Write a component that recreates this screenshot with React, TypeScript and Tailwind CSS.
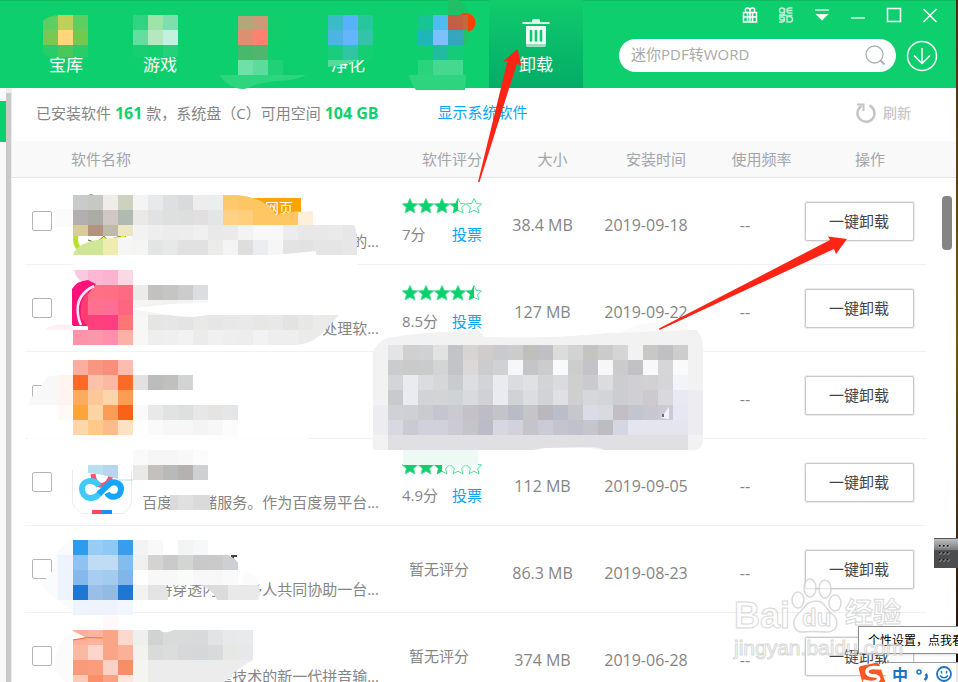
import type { ReactNode } from 'react';

const CELL = 15;

const APP_FONT = "font-['Open_Sans','Noto_Sans_CJK_SC',sans-serif]";

type CellsProps = { x: number; y: number; rows: string[]; last?: number };

// Blocks of 15px colour cells. A "-" leaves the cell empty, `last` is the height of the bottom row.
function Cells({ x, y, rows, last = CELL }: CellsProps) {
  return (
    <g shapeRendering="crispEdges">
      {rows.map((row, r) =>
        row.split(' ').map((color, c) =>
          color === '-' ? null : (
            <rect
              key={`${r}-${c}`}
              x={x + c * CELL}
              y={y + r * CELL}
              width={CELL}
              height={r === rows.length - 1 ? last : CELL}
              fill={`#${color}`}
            />
          ),
        ),
      )}
    </g>
  );
}

/* ---------- header ---------- */

function TrashIcon() {
  return (
    <svg viewBox="0 0 28 28" className="w-7 h-7" aria-hidden="true">
      <path d="M10 3V1.500Q10 0 11.500 0h5Q18 0 18 1.500V3h9.500v2H.500V3z" fill="#d8f9e6" />
      <path d="M4 7h20v18.500q0 2-2 2H6q-2 0-2-2z" fill="#effdf5" />
      <path d="M4 25h20v1q0 2-2 2H6q-2 0-2-2z" fill="#9be0be" />
      <path d="M9 12v9.500M14 12v9.500M19 12v9.500" stroke="#10c873" strokeWidth="2.600" strokeLinecap="round" />
    </svg>
  );
}

const tabs: { name: string; label?: string; art?: ReactNode; active?: boolean }[] = [
  {
    name: '宝库',
    label: '宝库',
    art: (
      <>
        <Cells x={24} y={15} rows={['5fce62 bfd058 5fce60', '7ac850 ffd67a 74c84e', '28cc68 4ac95a 28cd68']} last={12} />
        <path d="M23 14h26Q28 15 23 22zM23 50q2 6 10 8H23z" fill="#0ecf6d" />
      </>
    ),
  },
  {
    name: '游戏',
    label: '游戏',
    art: <Cells x={20} y={15} rows={['30d481 9ee4aa 7cdfad', '62dfa0 b6e8c0 c4f1df', '17cf71 12d070 22d17a']} last={12} />,
  },
  {
    name: '应用',
    art: (
      <>
        <Cells x={31} y={16} rows={['b5a57a cc9a79 12cd6c']} last={14} />
        <Cells x={31} y={30} rows={['dd8f72 ff826f 12cd6c', '48b86b 52b56d 0ecf6d', '70e1a6 5cdc9b 20d177']} />
        <path d="M13 75h86q-8 5-28 6-22 2-30 7-5 2-12 0-10-3-16-13z" fill="#2dd57f" />
      </>
    ),
  },
  {
    name: '净化',
    label: '净化',
    art: (
      <>
        <Cells x={27} y={15} rows={['3bbbc6 57b2fb 26c79d', '4db3e2 64b5fb 35c2ab', '1acd7e 30c6a3 13ce72']} />
        <path d="M27 60h30l-8 3-22 4z" fill="#57dc98" />
      </>
    ),
  },
  {
    name: '工具',
    art: (
      <>
        <path d="M53 0h10q10 6 10 16v29H53z" fill="#1fc164" />
        <circle cx="71" cy="22.500" r="9.500" fill="#f84300" />
        <path d="M59 0h4q8 4 10 13H59z" fill="#1fc164" />
        <Cells x={23} y={15} rows={['16c496 4fbcef c45e45', '1eb6b8 7cc0fd 35a7bd', '10ce70 20bca0 15ca78', '2ad47e 45d98f 45d98f']} />
        <path d="M68 15h5v15h-5z" fill="#c06a3a" />
        <path d="M68 30h5v15h-5z" fill="#25c167" />
        <path d="M14 75h57l-1 15H21q-4-4-7-15z" fill="#2dd57f" />
      </>
    ),
  },
  { name: '卸载', label: '卸载', active: true },
];

function Tabs() {
  return (
    <nav className="flex pl-[19px]">
      {tabs.map((tab) => (
        <button
          key={tab.name}
          aria-label={tab.name}
          className={
            tab.active
              ? 'relative flex flex-col items-center w-[94px] h-[88px] pt-[49px] bg-linear-to-b from-[#10cb6c] to-[#03ac68]'
              : 'relative flex flex-col items-center w-[94px] h-[88px] pt-[49px]'
          }
        >
          {tab.active && (
            <span className="absolute left-[33px] top-[19px]">
              <TrashIcon />
            </span>
          )}
          <span className="text-[17px] leading-8 text-white">{tab.label}</span>
          {tab.art && (
            <svg viewBox="0 0 94 88" className="absolute inset-0 w-[94px] h-[88px] overflow-visible" aria-hidden="true">
              {tab.art}
            </svg>
          )}
        </button>
      ))}
    </nav>
  );
}

const windowIcons: { name: string; art: ReactNode }[] = [
  {
    name: '礼包',
    art: <path d="M1.500 5.500h13v9.500h-13zM1.500 10h13M5.500 5.500V15M10.500 5.500V15M3.500 5V2.500Q3.500 1 5.500 1 8 1 8 3.500 8 1 10.500 1q2 0 2 1.500V5M8 3v12" strokeWidth="1.500" />,
  },
  {
    name: '皮肤',
    art: (
      <g strokeWidth="1.500" opacity="0.7">
        <circle cx="4" cy="3.500" r="2.500" />
        <path d="M6.500 1v5q0 2-3 2H1M14.500 1h-3Q9 1 9 3.500T11.500 6h3M9.500 3.500h5" />
        <path d="M1 8.500h13.500" />
        <path d="M1 15h3q2.500 0 2.500-2.500T4 10H2q-1 2 1 3h3M9 9v6h3q2.500 0 2.500-2.500T12 9.500H9" />
      </g>
    ),
  },
  {
    name: '菜单',
    art: (
      <>
        <path d="M1 3h14" strokeWidth="2" opacity="0.6" />
        <path d="M1.500 7h13L8 13.500z" fill="white" stroke="none" />
      </>
    ),
  },
  { name: '最小化', art: <path d="M1 11h14" strokeWidth="2" opacity="0.6" /> },
  { name: '最大化', art: <path d="M1.500 1.500h13v13h-13z" strokeWidth="1.500" /> },
  { name: '关闭', art: <path d="M1.500 2l13 13M14.500 2l-13 13" strokeWidth="1.500" /> },
];

function Header() {
  return (
    <header className="flex justify-between h-[88px] bg-[#0ecf6d] shadow-[inset_0_1px_0_#10b860]">
      <Tabs />
      <div className="pt-[7px] pr-[18px]">
        <div className="flex justify-end gap-5">
          {windowIcons.map((icon) => (
            <button key={icon.name} aria-label={icon.name}>
              <svg viewBox="0 0 16 16" className="w-4 h-4" fill="none" stroke="white">
                {icon.art}
              </svg>
            </button>
          ))}
        </div>
        <div className="flex items-center gap-[10px] mt-4">
          <label className="flex items-center w-[277px] h-[33px] pl-3 pr-[10px] rounded-full bg-white">
            <input
              type="text"
              aria-label="搜索"
              placeholder="迷你PDF转WORD"
              className="flex-1 min-w-0 pb-[3px] text-[15px] leading-6 outline-none placeholder:text-[#a9a9a9]"
            />
            <svg viewBox="0 0 21 21" className="w-[21px] h-[21px]" fill="none" stroke="#a9b0b2" strokeWidth="1.300">
              <circle cx="9.500" cy="9.500" r="8.500" />
              <path d="M15.500 15.500l4 4" strokeWidth="1.800" />
            </svg>
          </label>
          <button aria-label="下载管理">
            <svg viewBox="0 0 32 32" className="w-8 h-8" fill="none" stroke="white" strokeWidth="1.500">
              <circle cx="16" cy="16" r="14.500" />
              <path d="M16 8v15M8 15.500l8 8 8-8" />
            </svg>
          </button>
        </div>
      </div>
    </header>
  );
}

function StatusBar() {
  return (
    <div className="flex items-center h-[53px] pb-1 pl-6 pr-[45px] text-[15px] text-[#858585]">
      <p>
        已安装软件 <b className="text-base text-[#0ecf6d]">161</b> 款，系统盘（C）可用空间{' '}
        <b className="text-base text-[#0ecf6d]">104 GB</b>
      </p>
      <a href="#system" className="ml-[59px] text-[#0aa6f8]">
        显示系统软件
      </a>
      <button className="flex items-center gap-[6px] ml-auto text-sm font-medium text-[#c6c6c6]">
        <svg viewBox="0 0 22 22" className="w-[22px] h-[22px]" fill="none" stroke="#c6c6c6" strokeWidth="2.500">
          <path d="M14.500 3.500a8.500 8.500 0 1 1-8 .500" />
          <path d="M2 2.500h6.500V9" strokeWidth="2" />
        </svg>
        刷新
      </button>
    </div>
  );
}

/* ---------- software list ---------- */

const STAR = 'M8 .5l2.300 4.900 5.400.5-4.100 3.600 1.300 5.400L8 12.200l-4.900 2.700 1.300-5.400L.3 5.900l5.400-.5z';

function Stars({ score }: { score: number }) {
  return (
    <div className="flex" role="img" aria-label={`${score}`}>
      {[0, 1, 2, 3, 4].map((i) => (
        <svg key={i} viewBox="0 0 16 16" className="w-4 h-4">
          <path d={STAR} fill={score >= i + 1 ? '#0ecf6d' : 'white'} stroke="#4fdc97" strokeWidth="1" />
          {score === i + 0.5 && <path d="M8 .5v11.700l-4.900 2.700 1.300-5.400L.3 5.900l5.400-.5z" fill="#0ecf6d" />}
        </svg>
      ))}
    </div>
  );
}

type Software = {
  id: string;
  desc?: string;
  badge?: string;
  stars?: number;
  score?: string;
  size?: string;
  date?: string;
  top: number;
  art: ReactNode;
};

// Artwork shares one coordinate space, `top` is where the row starts in it.
const list: Software[] = [
  {
    id: 'a',
    desc: '的...',
    badge: '网页',
    stars: 3.5,
    score: '7分',
    size: '38.4 MB',
    date: '2019-09-18',
    top: 178,
    art: (
      <>
        <path d="M88 196q3-4 7 0zM108 196q4-2 8 0z" fill="#8a8a8a" />
        <path d="M76 235q-2 10 4 14" fill="none" stroke="#b8e02a" strokeWidth="5" />
        <path d="M88 240l8 3 8-7 4 5 6-3 13-4-4 6-20 6z" fill="#e9f235" stroke="#6a6a20" strokeWidth="0.800" />
        <rect x="54" y="209" width="19" height="18" rx="3" fill="#fbfbfb" />
        <Cells
          x={73}
          y={195}
          rows={[
            'c9cbcb c7c8c4 f0ede8 cdd2c0 f3f4f3 e7e9ec dedfe0 d9dadb ededed ebeeee ffc96b',
            'b3aeb0 abaca3 d0c9c3 afbab3 ebe9e8 e1e2e3 dedfdf dddfdf e1dfdf e4e5e7 ffd184 ffcf7d',
          ]}
        />
        <path d="M238 195q28 3 38 20l22-4v14h-45v-15h-15z" fill="#ffc664" />
        <path d="M298 212l15-1v14h-15z" fill="#ffeed8" />
        <Cells x={73} y={225} rows={['d8cd98 b3937f bfbaaa ece6c2']} last={11} />
        <Cells x={133} y={225} rows={['f2f2f2 eeeeee ececec ededed f0f0f0 e9e9e9 eaeaea f3f3f3 f8f8f8 f8f8f8 ececec e8e8e8 e8e8e8 eaeaea']} />
        <path d="M343 225h11q3 5 3 15v15h-14z" fill="#e7e7e7" />
        <path d="M73 255q4-13 30-16v16z" fill="#cfe697" />
        <path d="M103 239l15-2v18h-15z" fill="#f0ebb0" />
        <path d="M118 238l15-2v19h-15z" fill="#f6f6f4" />
        <Cells x={133} y={240} rows={['f5f5f5 e3e4e4 e7e8e8 e1e1e1 e2e1e1 ececeb f5f4f5 dededf ecedf0 f6f6f6 e3e3e3 e2e2e3 e5e5e5 e5e5e5']} />
        <path d="M73 256h243v13H73zM240 257q40-2 76-6v18h41v-14h-41z" fill="white" />
      </>
    ),
  },
  {
    id: 'b',
    desc: '处理软...',
    stars: 4.5,
    score: '8.5分',
    size: '127 MB',
    date: '2019-09-22',
    top: 265,
    art: (
      <>
        <path d="M74 270h14v14q-12-3-14-14z" fill="#fccae0" />
        <Cells x={88} y={270} rows={['fcb8d2 fdb3cf fbd8e2', 'ff7087 ff7085 ff6a83', 'ff7091 ff6f95 ff6580', 'ff407c ff3d80 fd7577', 'fb97ab ff8faa fbb1a6']} />
        <path d="M72 326v-37q4-8 16-9l8 4-8 10v32z" fill="#ff137b" />
        <path d="M88 291q-9 10-7 27l7 9z" fill="#ff3d70" />
        <path d="M94 286Q75 295 78 315q1 6 3 10" fill="none" stroke="#ffeef5" strokeWidth="2.500" />
        <Cells x={73} y={330} rows={['fd93a9']} />
        <path d="M45 330q8-8 28-5v5z" fill="#fdf1f5" />
        <Cells x={133} y={285} rows={['ebebea c2c1c0 c5c5c4 cccccc dcdde0', 'f5f5f5 f3f3f3 f1f1f1 f4f4f4 f8f8f8']} />
        <path d="M133 309q30-6 75-6v12h-15q-30 0-60-6z" fill="white" />
        <Cells x={133} y={315} rows={['f7f7f6 e5e5e4 e6e6e6 e4e4e4 e9e9e8 e6e6e6 e8e8e8 e9e9e9 e7e7e6 e8e8e8 e3e3e2 e7e7e7']} />
        <Cells x={133} y={330} rows={['f7f7f6 eeeeee efefef f2f2f2 ebebeb f0f0f0 eeeeee ededed f2f2f2 eeeeee eeeeee']} />
        <path d="M313 315h26q-11 12-14 15-10 13-27 15v-15h15z" fill="#ebebea" />
        <path d="M133 309q30-2 75 0v6l-16 2q-25-1-59-8z" fill="white" />
      </>
    ),
  },
  {
    id: 'c',
    top: 352,
    art: (
      <>
        <path d="M28 405q4-10 10-15l10-14h25v29z" fill="#f8f8f8" />
        <rect x="30" y="405" width="28" height="20" fill="white" />
        <path d="M58 375h15v30H58z" fill="#fff4f0" />
        <path d="M58 405h15v15H58z" fill="#fffaf3" />
        <Cells x={73} y={360} rows={['faae9f f9967f f98f7b fbbdb0', 'fb6a26 fcc1a9 fbb9a2 fb6a26', 'fcac5e fdc898 fdd5aa fb9d55', 'ffa33b fdd4a5 fb9d57 f86318', 'fed7aa ffc989 fcbb8a fce2c0']} />
        <Cells x={133} y={375} rows={['e5e1e0 bbbcbe c1c0bd d2d3d4']} />
        <Cells x={133} y={405} rows={['fafafa e9e9e9 e1e2e2 dde0df e7e7e7 e5e4e2 e5e6e8', '- fafafa f7f7f7 f7f7f7 f4f4f4 f7f7f7 fbfcfb']} />
        <path d="M28 435h280v6H28z" fill="#fefefe" />
      </>
    ),
  },
  {
    id: 'd',
    desc: '百度云存储服务。作为百度易平台...',
    stars: 2.5,
    score: '4.9分',
    size: '112 MB',
    date: '2019-09-05',
    top: 439,
    art: (
      <>
        <path d="M72.500 470v32q1 6 9 11.500h42q7-5 8-11.500v-32" fill="white" stroke="#ececec" />
        <path d="M92 510h10v4H92z" fill="#ff4568" />
        <path d="M102 510h10v4h-10z" fill="#1b8bff" />
        <path d="M93 474c1 15 16 15 18 1" fill="none" stroke="#ff5274" strokeWidth="5" />
        <path d="M101 491c-6 11-19 8-19-2 0-9 12-11 17-3" fill="none" stroke="#3ecbfa" strokeWidth="6" />
        <path d="M99 494l8-8c6-7 14-3 14 3 0 9-11 10-14 4" fill="none" stroke="#14a5ff" strokeWidth="6" />
        <path d="M88 465h15v10l-15-2z" fill="#b7dfee" />
        <path d="M103 465h15v14l-15-4z" fill="#b9d4ee" />
        <path d="M118 480h15" stroke="#addcf8" />
        <Cells x={133} y={450} rows={['fafafa f6f6f6 f6f6f6 f8f8f8 fcfcfc', 'e9e9e8 c3c0be b7bab8 b4b1b0 cfd0d2']} />
        <path d="M170 495h40v15h-40z" fill="#dadada" />
        <path d="M178 495h15v15h-15z" fill="#e0e0e0" />
      </>
    ),
  },
  {
    id: 'e',
    desc: '持穿透内网，多人共同协助一台...',
    score: '暂无评分',
    size: '86.3 MB',
    date: '2019-08-23',
    top: 526,
    art: (
      <>
        <path d="M73 540q-18 6-20 30l-11 14q8 14 31 26z" fill="#f9fbfd" />
        <path d="M58 555h15v45H58z" fill="#eef4fd" />
        <Cells x={73} y={540} rows={['2f9bec 98ccf5 8ec8f5 389ded', '8fc2f3 c0dcf4 c0dcf4 82bdee', '85b8eb a7cdf0 a3caef 82b6e8', '2077d3 99bfe9 91bae7 2077d3', 'eef3fd eef3fd eef3fd f2f6fd']} />
        <path d="M231 555h6v2h-3v3h-3z" fill="#444" />
        <Cells x={133} y={540} rows={['f3f3f3 f9f9f9 ffffff f4f4f4 f7f8fa', 'f0f0f0 d5d3d1 c8cbc9 d2d5d3 c9c9c9 cacaca', 'ffffff f8f8f8 f8f8f8 fafcfa f8f8f8 f8f8f8 fafafa']} />
        <path d="M223 555h5q7 3 10 8v7h-15z" fill="#cdcfd3" />
        <path d="M133 585h32q4 8 3 15h-35z" fill="#e3e4e3" />
        <path d="M133 585h15v15h-15z" fill="#f2f2f1" />
        <path d="M200 585h43v15h-26q-3-10-17-15z" fill="#dcdcdc" />
        <path d="M228 585h30q4 8 0 15h-30z" fill="#e9e9ea" />
        <path d="M243 572q12 0 16 13h-16z" fill="#fbfbfb" />
      </>
    ),
  },
  {
    id: 'f',
    desc: '擎技术的新一代拼音输...',
    score: '暂无评分',
    size: '374 MB',
    date: '2019-06-28',
    top: 613,
    art: (
      <>
        <path d="M73 632q-20 12-18 36l10 15h8z" fill="#fbfbfb" />
        <path d="M103 615h15v15h-15z" fill="#fffaf7" />
        <Cells x={73} y={630} rows={['fcb09a fcb49c faa588 fdd8cc', 'f9b9a4 fdd6cb faa588 fab198', 'f99a78 fb9d7d fdd1c6 f68f67', 'fccab7 f9906a fba283 fee6de']} />
        <path d="M73 631l12 6-12 3z" fill="white" />
        <path d="M73 640q14-4 30-2" fill="none" stroke="#f5713a" />
        <Cells x={133} y={630} rows={['efefed d0d3d1 d9dada d9dada d8d9da e2e3e4 e8e9eb e9eaec', 'f2f3ef d9dada dcdcdc d8d8da d6d7d9 d9dadc e7e7e4 e6e8ea']} />
        <path d="M160 630h14l-6 2q-6 1-8-2z" fill="white" />
        <path d="M133 660h120q-16 9-21 15-3 4-9 8h-90z" fill="#ececec" />
        <path d="M133 660h15v23h-15z" fill="#f4f5f3" />
      </>
    ),
  },
];

function SoftwareRow({ item }: { item: Software }) {
  const cell = 'border-b border-[#f2f2f2] text-center';
  return (
    <tr className="h-[87px] text-[#858585]">
      <td />
      <td className="relative border-b border-[#f2f2f2] pl-[7px]">
        <input
          type="checkbox"
          aria-label={`选择 ${item.desc ?? ''}`}
          className="block w-5 h-5 appearance-none rounded-xs border border-[#b5b5b5] bg-white"
        />
        {/* starts at the checkbox column and runs across the name column */}
        <svg
          viewBox={`25 ${item.top} 355 87`}
          className="absolute left-0 top-0 z-10 w-[355px] h-[87px] overflow-visible pointer-events-none"
          aria-hidden="true"
        >
          {item.art}
        </svg>
      </td>
      <td className="border-b border-[#f2f2f2]">
        <div className="w-[308px] h-[86px] pt-5 text-[15px] text-right">
          <div className="h-[33px]">
            {item.badge && (
              <span className="block w-[76px] h-[18px] ml-[154px] pr-2 bg-[#ffa300] text-sm leading-5 text-white">
                {item.badge}
              </span>
            )}
          </div>
          <p className="leading-5">{item.desc}</p>
        </div>
      </td>
      <td className="border-b border-[#f2f2f2] text-[15px]">
        {item.stars ? (
          <div className="pt-[2px]">
            <Stars score={item.stars} />
            <div className="flex items-center justify-between w-20 pt-2 leading-6">
              <span>{item.score}</span>
              <a href="#vote" className="text-[#0aa6f8]">
                投票
              </a>
            </div>
          </div>
        ) : (
          <span className="pl-[7px]">{item.score}</span>
        )}
      </td>
      <td className={`${cell} pt-2`}>{item.size}</td>
      <td className={`${cell} pt-2`}>{item.date}</td>
      <td className={`${cell} pt-2`}>--</td>
      <td className={`${cell} pr-[2px]`}>
        <button className="w-[109px] h-[39px] rounded-xs border border-[#c9c9c9] ring-1 ring-[#ececec] bg-white text-[15px] text-[#444]">
          一键卸载
        </button>
      </td>
      <td />
    </tr>
  );
}

function SoftwareTable() {
  const head = 'pl-5 font-normal';
  return (
    <table className="w-full table-fixed border-separate border-spacing-0">
      <colgroup>
        <col className="w-[13px]" />
        <col className="w-[46px]" />
        <col />
        <col className="w-[87px]" />
        <col className="w-[107px]" />
        <col className="w-[100px]" />
        <col className="w-[98px]" />
        <col className="w-[132px]" />
        <col className="w-[30px]" />
      </colgroup>
      <thead>
        <tr className="h-[37px] bg-[#f9f9f9] text-[15px] text-[#a1a6ac] shadow-[inset_0_-1px_0_#e6e6e6]">
          <td />
          <td />
          <th className="font-normal text-left">软件名称</th>
          <th className="pl-5 font-normal text-left whitespace-nowrap">软件评分</th>
          <th className={head}>大小</th>
          <th className={head}>安装时间</th>
          <th className="pl-[33px] font-normal whitespace-nowrap">使用频率</th>
          <th className={head}>操作</th>
          <td />
        </tr>
      </thead>
      <tbody>
        {list.map((item) => (
          <SoftwareRow key={item.id} item={item} />
        ))}
      </tbody>
    </table>
  );
}

/* ---------- things lying over the window ---------- */

function BlurPatch() {
  return (
    <svg viewBox="373 322 331 144" className="absolute left-[373px] top-[322px] z-20 w-[331px] h-[144px]" aria-hidden="true">
      <path d="M617 334q16-9 27-10 24-4 44-2v10l-71 6z" fill="#fafafa" />
      <path d="M373 352q4-10 14-14 40-7 92-7l6 6q60 2 112-3 16-2 22-1l69-3h8q7 5 7 18v92q0 9-8 10H598q-8-4-50-2l-15 2H373z" fill="#f2f2f2" />
      <path d="M373 405h15v30h-15zM688 390h15v45h-15z" fill="#ededf1" />
      <path d="M388 435h300v15h-83q-6-3-12-3l-50 1-10 2H388z" fill="#e0e0e4" />
      <Cells
        x={388}
        y={345}
        rows={[
          'e4e4e6 cfd0cf d0d1d2 e2e2e2 c3c4c7 d6d5d4 d0cccc cacace cccccc bfbfbb c0c0c4 dcdcda d1d2d2 c4c4c3 cbcbcb d5d5d6 f2f2f2 c8c8c6 c0bfc2 cdcdcd',
          'cbcccd cacaca cbcbcb d3d4d4 c3c4c8 dcd8d9 ccccce d0d1d3 f6f7f9 c5c5c8 cccccd f8f9fa cdcdcd c3c3c8 f7f7f8 cacbcd c2c2c4 f8f8fa d6d6d8 fafafb',
          'd4d4d9 eaebef dbdce0 d6d7d9 cacbce dcdee1 d2d4d7 eaebf0 dbdce0 dfe1e5 d2d4d6 d9dbdf cfcfd0 cacbce dcdce0 cdcdd0 d0d0d4 d1d1d1 d5d5d8 f3f4fa',
          'c9cacc eaebf0 d1d3d5 d2d4d6 d0d3d6 d8dadd d0d0d5 eaebf0 d0d2d5 dbdde1 d2d3d5 e0dfe4 cfcfd0 d5d7db d3d4d7 cccdd1 d0d0d4 ccc9cf d8d8dd e9e9f2',
          'd0d1d6 cfd0d4 cacbcf c4c5d0 cacad0 c4c2c6 bebdc5 c3c4c8 b9bbc6 c4c4c9 bab8bd babec8 c7c6cc dadbe4 d9dae0 c2bfc4 c2c5d0 c7c7cd cccad3 e6e7f2',
          'd8d8e3 cacad3 d0d1dc d1d1dc cccbd5 c5c4ca bcbcc8 d6d7e1 d1d2db c5c4cb c9ccd6 c4c5cc c0c1cc c6c5cd bcbcc1 d4d7e2 e5e5f0 e5e5f0 e5e5f0 e5e5f0',
        ]}
      />
      <path d="M661 418l8-11v12z" fill="#f3f4fa" />
      <path d="M662 414h2v3h-2z" fill="#55708f" />
      <path d="M403 450h75v15h-75z" fill="#edfaf3" />
    </svg>
  );
}

function Arrows() {
  return (
    <svg
      viewBox="470 40 390 300"
      className="absolute left-[470px] top-10 z-30 w-[390px] h-[300px] pointer-events-none"
      fill="#ff2416"
      aria-hidden="true"
    >
      <path d="M517.500 49L503 61.500l4.500-.500L478 182h1.500L517 63.500l4.500 2.500z" />
      <path d="M847 239l-19-2.500 2 3.500-171 88.500.5 1.500L834 249l2 5z" />
    </svg>
  );
}

function Watermark() {
  const outline = 'absolute font-bold text-white/70 [-webkit-text-stroke:1px_#cfcfcf]';
  return (
    <div className="absolute right-[52px] bottom-4 z-40 w-[172px] h-[88px] font-['Liberation_Sans','Noto_Sans_CJK_SC',sans-serif] opacity-80 pointer-events-none">
      <span className={`${outline} left-0 top-[18px] text-4xl leading-10`}>Bai</span>
      <svg viewBox="0 0 52 56" className="absolute left-[57px] top-0 w-[52px] h-14" fill="white" fillOpacity="0.7" stroke="#cfcfcf" strokeWidth="1.500" aria-hidden="true">
        <ellipse cx="7" cy="22" rx="6" ry="8" />
        <ellipse cx="19" cy="10" rx="6" ry="9" />
        <ellipse cx="34" cy="11" rx="6" ry="9" />
        <ellipse cx="44" cy="25" rx="6" ry="8" />
        <path d="M25 23c9 0 10 9 16 13 7 5 7 17-4 18-6 0-18-1-24 0-11 1-13-11-6-18 6-5 8-13 18-13z" />
      </svg>
      <span className={`${outline} left-[68px] top-[24px] text-2xl leading-8`}>du</span>
      <span className={`${outline} left-[111px] top-[16px] text-[28px] leading-10`}>经验</span>
      <span className="absolute left-0 top-[58px] text-[21px] leading-6 text-white/70 [-webkit-text-stroke:1px_#cfcfcf]">
        jingyan.baidu.com
      </span>
    </div>
  );
}

function InputMethodBar() {
  return (
    <div className="absolute right-0 bottom-0 z-30 w-[100px] font-['Noto_Sans_CJK_SC',sans-serif]">
      <p role="tooltip" className="h-7 pl-[9px] border border-r-0 border-[#8b8f94] bg-white text-xs leading-[26px] text-black whitespace-nowrap overflow-hidden shadow">
        个性设置，点我看
      </p>
      <div className="flex items-center h-7 pt-2">
        <svg viewBox="0 0 28 22" className="w-7 h-[22px] mt-1" aria-hidden="true">
          <path d="M1 7Q0 4 3 3L17 0q4-1 5 3l5 15q1 3-1 4H5z" fill="#f55a23" />
          <path d="M23 5Q10 3 9 8t9 5q5 2 1 5-5 3-14 0" fill="none" stroke="white" strokeWidth="3.500" />
        </svg>
        <div className="flex flex-1 items-center justify-between h-full pl-[6px] pr-[6px] pt-[3px] border-t border-[#9b9b9b] bg-white/90 text-[#1b74c5]">
          <button className="text-base leading-4 font-bold">中</button>
          <button aria-label="标点">
            <svg viewBox="0 0 14 14" className="w-[14px] h-[14px]" fill="none" stroke="currentColor">
              <circle cx="4" cy="5" r="2" strokeWidth="1.500" />
              <path d="M10.500 7q3 3-1 6" strokeWidth="2.500" />
            </svg>
          </button>
          <button aria-label="表情">
            <svg viewBox="0 0 16 16" className="w-4 h-4" fill="none" stroke="currentColor" strokeWidth="1.800">
              <circle cx="8" cy="8" r="7" />
              <path d="M5.500 5v2.500M10.500 5v2.500M4 9.500q4 4.500 8 0" strokeWidth="1.500" />
            </svg>
          </button>
        </div>
      </div>
    </div>
  );
}

function DockHandle() {
  return (
    <svg viewBox="0 0 24 30" className="absolute right-0 top-[538px] z-20 w-6 h-[30px]" aria-hidden="true">
      <defs>
        <linearGradient id="dock" x1="0" y1="0" x2="0" y2="1">
          <stop offset="0" stopColor="#c4c6c8" />
          <stop offset="0.400" stopColor="#77797b" />
          <stop offset="0.420" stopColor="#4b4c4e" />
          <stop offset="1" stopColor="#4b4c4e" />
        </linearGradient>
      </defs>
      <rect width="24" height="30" fill="url(#dock)" />
      <path d="M0 .5h24" stroke="#555" />
      {[7, 14, 21].map((y) =>
        [5, 9, 13].map((x) => (
          <g key={`${x}-${y}`}>
            <rect x={x} y={y} width="2" height="2" fill="#111" />
            <path d={`M${x} ${y + 2}h2v-2`} stroke="#d8d8d8" strokeWidth="0.600" fill="none" />
          </g>
        )),
      )}
    </svg>
  );
}

export default function App() {
  return (
    <div className={`relative flex h-screen overflow-hidden bg-white ${APP_FONT}`}>
      <div className="flex flex-1 flex-col min-w-0">
        <Header />
        <div className="flex flex-1 min-h-0">
          <aside className="w-[6px] pt-[13px] bg-[#f9f9f9]">
            <div className="h-[41px] bg-[#0ecf6d]" />
          </aside>
          <div className="w-[6px] pt-[5px] bg-[#ececec]">
            <div className="w-[5px] h-full bg-[#c9c9c9]" />
          </div>
          <main className="relative flex-1 min-w-0">
            <StatusBar />
            <SoftwareTable />
            <div className="absolute right-1 top-[108px] w-[10px] h-[54px] rounded-sm bg-[#848484]" />
          </main>
        </div>
      </div>
      <div className="w-[2px] bg-linear-to-b from-[#4a2c10] via-[#76561c] to-[#1a0d06]" />
      <BlurPatch />
      <Arrows />
      <Watermark />
      <DockHandle />
      <InputMethodBar />
    </div>
  );
}
